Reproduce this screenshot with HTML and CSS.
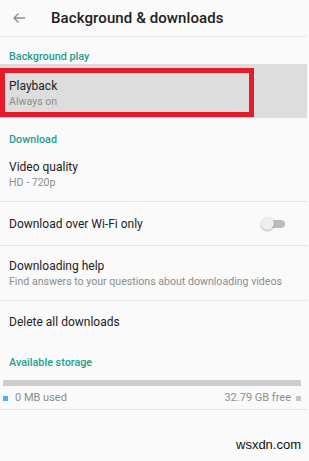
FILE: index.html
```html
<!DOCTYPE html>
<html lang="en">
<head>
    <meta charset="UTF-8">
    <meta name="viewport" content="width=device-width, initial-scale=1.0">
    <title>Background &amp; downloads</title>
    <link rel="stylesheet" href="styles.css">
</head>
<body>
    <div class="screen">
        <div class="header">
            <svg class="back" width="14" height="12" viewBox="0 0 14 12">
                <path d="M13 6H2M6.5 1.5L2 6l4.5 4.5" fill="none" stroke="#8a8a8a" stroke-width="1.3"/>
            </svg>
            <h1 class="title">Background &amp; downloads</h1>
        </div>

        <div class="section-label first">Background play</div>
        <div class="row two-line selected">
            <div class="primary">Playback</div>
            <div class="secondary">Always on</div>
            <div class="highlight"></div>
        </div>

        <div class="section-label">Download</div>
        <div class="row two-line divider">
            <div class="primary">Video quality</div>
            <div class="secondary">HD - 720p</div>
        </div>
        <div class="row one-line divider toggle-row">
            <div class="primary">Download over Wi-Fi only</div>
            <div class="switch">
                <span class="track"></span>
                <span class="thumb"></span>
            </div>
        </div>
        <div class="row two-line divider">
            <div class="primary">Downloading help</div>
            <div class="secondary">Find answers to your questions about downloading videos</div>
        </div>
        <div class="row one-line last">
            <div class="primary">Delete all downloads</div>
        </div>

        <div class="section-label">Available storage</div>
        <div class="storage">
            <div class="bar"></div>
            <div class="legend">
                <span class="key"><span class="swatch used"></span>0 MB used</span>
                <span class="key">32.79 GB free<span class="swatch free"></span></span>
            </div>
        </div>

        <div class="watermark">wsxdn.com</div>
    </div>
</body>
</html>
```

FILE: styles.css
```css
body {
    margin: 0;
    background: #fafafa;
    font-family: Roboto, "Noto Sans", sans-serif;
    color: #222;
}
.screen {
    width: 307px;
    height: 461px;
    position: relative;
}
.header {
    height: 36px;
    display: flex;
    align-items: center;
    border-bottom: 1px solid #e6e6e6;
}
.back {
    margin-left: 12px;
    margin-right: 25px;
}
.title {
    margin: 0;
    font-size: 15px;
    font-weight: 500;
    color: #202020;
    letter-spacing: 0.1px;
}
.section-label {
    font-size: 10.8px;
    font-weight: 500;
    color: #1e9f8c;
    padding: 15px 9px 0;
    height: 14px;
    line-height: 14px;
}
.section-label.first {
    padding-top: 13px;
}
.row {
    position: relative;
    padding: 0 9px;
    display: flex;
    flex-direction: column;
    justify-content: center;
}
.two-line {
    height: 52px;
    padding-top: 2px;
}
.one-line {
    height: 42px;
    padding-top: 1px;
}
.row.last {
    height: 39px;
}
.divider {
    border-bottom: 1px solid #e3e3e3;
}
.selected {
    background: #dddddd;
    height: 49px;
    padding-top: 5px;
}
.primary {
    font-size: 12px;
    line-height: 16px;
    color: #222;
}
.secondary {
    font-size: 10.6px;
    line-height: 16px;
    color: #8d8d8d;
}
.highlight {
    position: absolute;
    left: 0;
    top: 4px;
    width: 244px;
    height: 39px;
    border: 5px solid #e41b28;
}
.toggle-row {
    flex-direction: row;
    align-items: center;
    justify-content: space-between;
}
.switch {
    position: relative;
    width: 26px;
    height: 14px;
    margin-right: 11px;
}
.track {
    position: absolute;
    left: 6px;
    top: 3px;
    width: 18px;
    height: 8px;
    border-radius: 4px;
    background: #bcbcbc;
}
.thumb {
    position: absolute;
    left: 0;
    top: 0;
    width: 13px;
    height: 13px;
    border-radius: 50%;
    background: #eeeeee;
    box-shadow: 0 1px 2px rgba(0,0,0,0.3);
}
.storage {
    padding: 10px 6px 0 3px;
    height: 29px;
    border-bottom: 1px solid #e3e3e3;
}
.bar {
    height: 6px;
    background: #cdcdcd;
}
.legend {
    display: flex;
    justify-content: space-between;
    margin-top: 5px;
    font-size: 11px;
    line-height: 14px;
    color: #8d8d8d;
}
.key {
    display: flex;
    align-items: center;
}
.swatch {
    width: 5px;
    height: 5px;
}
.swatch.used {
    background: #55aaf0;
    margin-right: 7px;
}
.swatch.free {
    background: #c4c4c4;
    margin-left: 5px;
}
.watermark {
    position: absolute;
    left: 236px;
    top: 437px;
    font-family: "Liberation Sans", Arial, sans-serif;
    font-size: 13px;
    color: #111;
}
```
